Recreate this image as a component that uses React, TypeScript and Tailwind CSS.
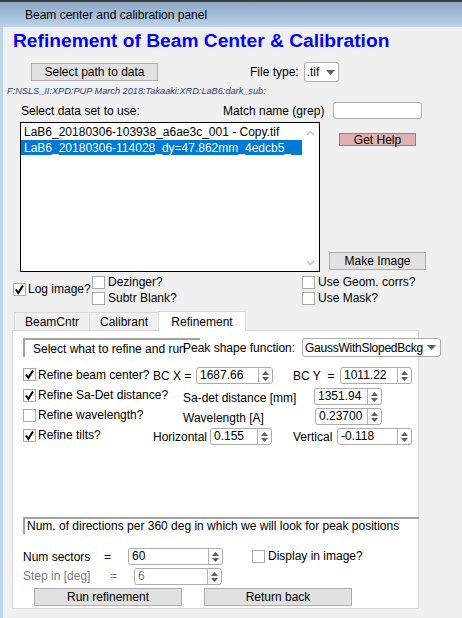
import React from "react";

function Check({ checked = false }: { checked?: boolean }) {
  return (
    <span className="inline-flex h-[13px] w-[13px] shrink-0 items-center justify-center border border-[#a9a9a9] bg-white">
      {checked && (
        <svg width="11" height="11" viewBox="0 0 11 11">
          <path d="M2 5.5 L4.3 9 L9 1.5" fill="none" stroke="#000" strokeWidth="2" />
        </svg>
      )}
    </span>
  );
}

function Arrows() {
  return (
    <span className="flex w-[14px] shrink-0 flex-col items-center justify-center gap-[2px] border-l border-[#b5b5b5]">
      <svg width="7" height="4" viewBox="0 0 7 4">
        <path d="M0 4 L3.5 0 L7 4Z" fill="#5f5f5f" />
      </svg>
      <svg width="7" height="4" viewBox="0 0 7 4">
        <path d="M0 0 L3.5 4 L7 0Z" fill="#5f5f5f" />
      </svg>
    </span>
  );
}

function Spin({ value, className, gray = false }: { value: string; className: string; gray?: boolean }) {
  return (
    <div className={`flex h-[17px] shrink-0 rounded-[3px] border border-[#acacac] bg-white ${className}`}>
      <span className={`flex-1 pl-[3px] leading-[15px] ${gray ? "text-[#7a7a7a]" : "text-black"}`}>{value}</span>
      <Arrows />
    </div>
  );
}

function Btn({ label, className }: { label: string; className: string }) {
  return (
    <div className={`flex shrink-0 items-center justify-center border border-[#adadad] bg-[#e1e1e1] leading-none ${className}`}>
      {label}
    </div>
  );
}

function DropArrow() {
  return (
    <svg width="9" height="5" viewBox="0 0 9 5" className="shrink-0">
      <path d="M0 0 L4.5 5 L9 0Z" fill="#606060" />
    </svg>
  );
}

export default function App() {
  return (
    <div className="h-[618px] w-[462px] overflow-hidden whitespace-nowrap bg-[#f0f0f0] font-['Liberation_Sans',Arial,sans-serif] text-[12px] text-black">
      <div className="h-[2px] bg-[#3c3c3c]" />
      <div className="flex h-[25px] items-center bg-linear-to-b from-[#8ca7c4] to-[#bcd3ec] pl-[25px] pt-[1px]">
        Beam center and calibration panel
      </div>
      <div className="flex h-[591px]">
        <div className="w-[3px] shrink-0 bg-[#bdd4ed]" />
        <div className="flex flex-1 flex-col">
          <div className="ml-[10px] mt-[3px] h-[22px] text-[19.2px] font-bold leading-[22px] text-[#0000ff]">
            Refinement of Beam Center &amp; Calibration
          </div>

          <div className="mt-[10px] flex h-[20px] items-center">
            <Btn label="Select path to data" className="ml-[28px] h-[18px] w-[127px]" />
            <span className="ml-[92px]">File type:</span>
            <div className="ml-[5px] flex h-[20px] w-[35px] items-center justify-between rounded-[3px] border border-[#acacac] bg-white pl-[2px] pr-[3px]">
              <span>.tif</span>
              <DropArrow />
            </div>
          </div>

          <div className="ml-[4px] mt-[3px] h-[13px] text-[9.2px] italic leading-[13px] text-[#1c3f8a]">
            F:NSLS_II:XPD:PUP March 2018:Takaaki:XRD:LaB6:dark_sub:
          </div>

          <div className="mt-[4px] flex h-[17px] items-center">
            <span className="ml-[18px] w-[202px]">Select data set to use:</span>
            <span className="w-[110px]">Match name (grep)</span>
            <div className="h-[17px] w-[89px] rounded-[3px] border border-[#acacac] bg-white" />
          </div>

          <div className="mt-[3px] flex">
            <div className="relative ml-[17px] h-[150px] w-[300px] shrink-0 border border-black bg-white">
              <div className="flex h-[17px] items-center pl-[3px]">LaB6_20180306-103938_a6ae3c_001 - Copy.tif</div>
              <div className="flex h-[15px] w-[281px] items-center bg-[#0078d7] pl-[3px] text-white">
                LaB6_20180306-114028_dy=47.862mm_4edcb5_
              </div>
              <svg className="absolute right-[4px] top-[7px]" width="9" height="6" viewBox="0 0 9 6">
                <path d="M1 5 L4.5 1.5 L8 5" fill="none" stroke="#c4c4c4" strokeWidth="1.5" />
              </svg>
              <svg className="absolute bottom-[5px] right-[4px]" width="9" height="6" viewBox="0 0 9 6">
                <path d="M1 1 L4.5 4.5 L8 1" fill="none" stroke="#c4c4c4" strokeWidth="1.5" />
              </svg>
            </div>
            <div className="flex flex-1 flex-col">
              <div className="ml-[19px] mt-[11px] flex h-[13px] w-[77px] items-center justify-center border border-[#a07a7a] bg-[#deb2b3] leading-none">
                Get Help
              </div>
              <Btn label="Make Image" className="ml-[9px] mt-[106px] h-[18px] w-[97px]" />
            </div>
          </div>

          <div className="mt-[4px] flex h-[30px] shrink-0">
            <div className="ml-[10px] mt-[7px] flex h-[13px] w-[79px] items-center gap-[2px]">
              <Check checked />
              <span className="leading-[13px]">Log image?</span>
            </div>
            <div className="flex w-[210px] flex-col gap-[3px]">
              <div className="flex h-[13px] items-center gap-[3px]">
                <Check />
                <span className="leading-[13px]">Dezinger?</span>
              </div>
              <div className="flex h-[13px] items-center gap-[3px]">
                <Check />
                <span className="leading-[13px]">Subtr Blank?</span>
              </div>
            </div>
            <div className="flex flex-col gap-[3px]">
              <div className="flex h-[13px] items-center gap-[3px]">
                <Check />
                <span className="leading-[13px]">Use Geom. corrs?</span>
              </div>
              <div className="flex h-[13px] items-center gap-[3px]">
                <Check />
                <span className="leading-[13px]">Use Mask?</span>
              </div>
            </div>
          </div>

          <div className="ml-[11px] mt-[5px] flex h-[19px] shrink-0 items-end">
            <div className="flex h-[18px] w-[75px] items-center justify-center border border-r-0 border-b-0 border-[#d9d9d9] bg-[#f0f0f0]">BeamCntr</div>
            <div className="flex h-[18px] w-[69px] items-center justify-center border border-r-0 border-b-0 border-[#d9d9d9] bg-[#f0f0f0]">Calibrant</div>
            <div className="relative z-10 -mb-px flex h-[20px] w-[88px] items-center justify-center border border-b-0 border-[#d9d9d9] bg-white">Refinement</div>
          </div>

          <div className="ml-[9px] flex h-[279px] w-[407px] shrink-0 flex-col border border-[#d9d9d9] bg-white">
            <div className="mt-[7px] flex h-[19px] items-center">
              <div className="ml-[10px] h-[19px] w-[177px] shrink-0 overflow-hidden border-l-2 border-t-2 border-[#a3a3a3] pl-[8px] pt-[2px] leading-[14px]">
                Select what to refine and run
              </div>
              <span className="-ml-[17px] mt-[1px] w-[119px] shrink-0">Peak shape function:</span>
              <div className="flex h-[19px] w-[139px] shrink-0 items-center justify-between rounded-[3px] border border-[#acacac] bg-white pl-[2px] pr-[4px]">
                <span className="tracking-[-0.25px]">GaussWithSlopedBckg</span>
                <DropArrow />
              </div>
            </div>

            <div className="mt-[10px] flex h-[18px] items-start">
              <span className="ml-[10px] flex h-[15px] items-center"><Check checked /></span>
              <span className="ml-[2px] w-[115px] leading-[16px]">Refine beam center?</span>
              <span className="w-[43px] leading-[18px]">BC X =</span>
              <Spin value="1687.66" className="w-[77px]" />
              <span className="ml-[20px] w-[47px] leading-[18px]">BC Y&nbsp; =</span>
              <Spin value="1011.22" className="w-[72px]" />
            </div>

            <div className="mt-[2px] flex h-[18px] items-start">
              <span className="ml-[10px] flex h-[16px] items-center"><Check checked /></span>
              <span className="ml-[2px] w-[145px] leading-[16px]">Refine Sa-Det distance?</span>
              <span className="w-[131px] pt-[2px] leading-[18px]">Sa-det distance [mm]</span>
              <Spin value="1351.94" className="mt-[1px] w-[68px]" />
            </div>

            <div className="mt-[2px] flex h-[18px] items-start">
              <span className="ml-[10px] flex h-[16px] items-center"><Check /></span>
              <span className="ml-[2px] w-[145px] leading-[16px]">Refine wavelength?</span>
              <span className="w-[132px] pt-[2px] leading-[18px]">Wavelength [A]</span>
              <Spin value="0.23700" className="mt-[1px] w-[67px]" />
            </div>

            <div className="mt-[2px] flex h-[18px] items-start">
              <span className="ml-[10px] flex h-[16px] items-center"><Check checked /></span>
              <span className="ml-[2px] w-[115px] leading-[16px]">Refine tilts?</span>
              <span className="w-[57px] pt-[1px] leading-[18px]">Horizontal</span>
              <Spin value="0.155" className="mt-[1px] w-[62px]" />
              <span className="ml-[21px] w-[44px] pt-[1px] leading-[18px]">Vertical</span>
              <Spin value="-0.118" className="mt-[1px] w-[75px]" />
            </div>

            <div className="ml-[10px] mt-[72px] h-[17px] w-[396px] border-l-2 border-t-2 border-[#a3a3a3] pl-[2px] leading-[15px]">
              Num. of directions per 360 deg in which we will look for peak positions
            </div>

            <div className="mt-[14px] flex h-[17px] items-start">
              <span className="ml-[10px] w-[81px] pt-[1px] leading-[16px]">Num sectors</span>
              <span className="w-[24px] pt-[1px] leading-[16px]">=</span>
              <Spin value="60" className="w-[95px]" />
              <span className="-mt-[1px] ml-[29px] flex items-center gap-[3px]">
                <Check />
                <span>Display in image?</span>
              </span>
            </div>

            <div className="mt-[3px] flex h-[16px] items-start text-[#7a7a7a]">
              <span className="ml-[10px] w-[87px] leading-[16px]">Step in [deg]</span>
              <span className="w-[24px] leading-[16px]">=</span>
              <Spin value="6" gray className="w-[88px]" />
            </div>

            <div className="mt-[4px] flex h-[18px]">
              <Btn label="Run refinement" className="ml-[21px] h-[18px] w-[148px]" />
              <Btn label="Return back" className="ml-[22px] h-[18px] w-[148px]" />
            </div>
          </div>
        </div>
      </div>
    </div>
  );
}
